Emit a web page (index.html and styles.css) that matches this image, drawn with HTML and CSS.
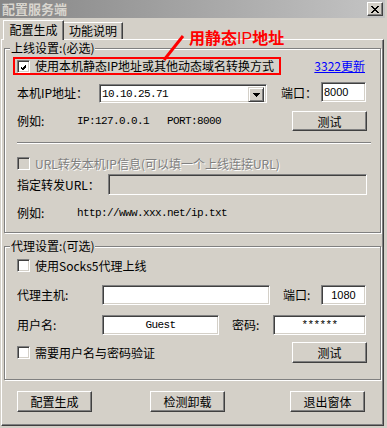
FILE: index.html
```html
<!DOCTYPE html>
<html>
<head>
<meta charset="utf-8">
<title>配置服务端</title>
<link rel="stylesheet" href="styles.css">
</head>
<body>
<div class="window">

<div class="titlebar">
	<span class="caption">配置服务端</span>
	<span class="close">
		<svg width="8" height="7" viewBox="0 0 8 7" shape-rendering="crispEdges"><path d="M0 0h2v1H0z M6 0h2v1H6z M1 1h2v1H1z M5 1h2v1H5z M2 2h4v1H2z M3 3h2v1H3z M2 4h4v1H2z M1 5h2v1H1z M5 5h2v1H5z M0 6h2v1H0z M6 6h2v1H6z" fill="#000"/></svg>
	</span>
</div>

<div class="tabs">
	<div class="tab tab_active">配置生成</div>
	<div class="tab">功能说明</div>
</div>

<div class="panel">

	<fieldset class="group group_online">
		<legend>上线设置:(必选)</legend>

		<div class="row row_static">
			<span class="mark">
				<span class="check"><svg width="9" height="9" viewBox="0 0 9 9" shape-rendering="crispEdges"><polygon points="1,3 3,5 7,1 7,4 3,8 1,6" fill="#000"/></svg></span>
				<span class="check_text">使用本机静态IP地址或其他动态域名转换方式</span>
			</span>
			<a class="link" href="#">3322更新</a>
		</div>

		<div class="row row_ip">
			<span class="label label_ip">本机IP地址：</span>
			<div class="combo">
				<span class="combo_text mono">10.10.25.71</span>
				<span class="combo_btn"><svg width="7" height="4" viewBox="0 0 7 4" shape-rendering="crispEdges"><path d="M0 0h7v1H0z M1 1h5v1H1z M2 2h3v1H2z M3 3h1v1H3z" fill="#000"/></svg></span>
			</div>
			<span class="label label_port">端口：</span>
			<span class="field field_port">8000</span>
		</div>

		<div class="row row_example">
			<span class="label label_example">例如:</span>
			<span class="mono">IP:127.0.0.1   PORT:8000</span>
			<button class="btn btn_test">测试</button>
		</div>

		<div class="separator"></div>

		<div class="row row_disabled">
			<span class="check check_disabled"></span>
			<span class="check_text disabled_text">URL转发本机IP信息(可以填一个上线连接URL)</span>
		</div>

		<div class="row row_url">
			<span class="label label_url">指定转发URL：</span>
			<span class="field field_url"></span>
		</div>

		<div class="row row_example2">
			<span class="label label_example">例如:</span>
			<span class="mono">http://www.xxx.net/ip.txt</span>
		</div>
	</fieldset>

	<fieldset class="group group_proxy">
		<legend>代理设置:(可选)</legend>

		<div class="row row_socks">
			<span class="check"></span>
			<span class="check_text">使用Socks5代理上线</span>
		</div>

		<div class="row row_host">
			<span class="label label_host">代理主机:</span>
			<span class="field field_host"></span>
			<span class="label label_port2">端口:</span>
			<span class="field field_port2">1080</span>
		</div>

		<div class="row row_user">
			<span class="label label_host">用户名:</span>
			<span class="field field_user mono">Guest</span>
			<span class="label label_pass">密码:</span>
			<span class="field field_pass mono">******</span>
		</div>

		<div class="row row_auth">
			<span class="check"></span>
			<span class="check_text">需要用户名与密码验证</span>
			<button class="btn btn_test btn_tall">测试</button>
		</div>
	</fieldset>

	<div class="row row_buttons">
		<button class="btn btn_bottom">配置生成</button>
		<button class="btn btn_bottom btn_mid">检测卸载</button>
		<button class="btn btn_bottom btn_exit">退出窗体</button>
	</div>

</div>

<!-- red note drawn over the dialog -->
<div class="note">用静态<span class="note_ip">IP</span>地址</div>
<svg class="note_line" width="30" height="30" viewBox="0 0 30 30"><line x1="23" y1="2" x2="4" y2="26" stroke="#f00" stroke-width="3"/></svg>

</div>
</body>
</html>
```

FILE: styles.css
```css
body {
	margin: 0;
	background: #d4d0c8;
	font-family: "Noto Sans CJK SC", sans-serif;
	font-size: 12px;
	line-height: 14px;
	color: #000;
}

.window {
	position: relative;
	width: 387px;
	height: 428px;
	overflow: hidden;
}

/* title bar */

.titlebar {
	width: 385px;
	height: 18px;
	box-sizing: border-box;
	padding: 0 2px 0 2px;
	display: flex;
	align-items: center;
	justify-content: space-between;
	background: linear-gradient(to right, #868686, #c4c4c4);
}

.caption {
	font-weight: bold;
	font-size: 13px;
	color: #d8d5ce;
	letter-spacing: 0px;
}

.close {
	width: 16px;
	height: 14px;
	box-sizing: border-box;
	display: flex;
	align-items: center;
	justify-content: center;
	background: #d4d0c8;
	border: 1px solid;
	border-color: #fff #404040 #404040 #fff;
	box-shadow: inset -1px -1px #808080;
}

/* tabs */

.tabs {
	margin-top: 2px;
	height: 19px;
	padding-left: 3px;
	display: flex;
	align-items: flex-start;
	position: relative;
	z-index: 1;
}

.tab {
	box-sizing: border-box;
	width: 59px;
	height: 17px;
	margin-top: 2px;
	display: flex;
	align-items: center;
	justify-content: center;
	border-top: 1px solid #fff;
	border-right: 1px solid #404040;
	box-shadow: inset -1px 0 #808080;
	background: #d4d0c8;
}

.tab_active {
	width: 61px;
	height: 20px;
	margin-top: 0;
	padding-bottom: 2px;
	border-left: 1px solid #fff;
	font-size: 12px;
}

/* tab page */

.panel {
	margin-left: 1px;
	width: 383px;
	height: 387px;
	box-sizing: border-box;
	padding: 1px 0 0 2px;
	border: 1px solid;
	border-color: #fff #404040 #404040 #fff;
	box-shadow: inset -1px -1px #808080;
}

.group {
	width: 377px;
	box-sizing: border-box;
	margin: 0;
	padding: 0 13px 12px 12px;
	border: 1px solid #808080;
	box-shadow: inset 1px 1px #fff, 1px 1px #fff;
}

.group legend {
	margin-left: -7px;
	padding: 0 1px;
	line-height: 14px;
	background: #d4d0c8;
}

.group_proxy {
	margin-top: 6px;
	padding-bottom: 16px;
}

.row {
	display: flex;
	align-items: center;
	white-space: pre;
}

.label {
	flex: none;
}

.mono {
	font-family: "Liberation Mono", monospace;
	font-size: 11px;
	letter-spacing: -0.6px;
}

/* checkboxes */

.check {
	flex: none;
	width: 13px;
	height: 13px;
	box-sizing: border-box;
	padding: 1px;
	background: #fff;
	border: 1px solid;
	border-color: #808080 #fff #fff #808080;
	box-shadow: inset 1px 1px #404040, inset -1px -1px #d4d0c8;
	display: flex;
}

.check svg {
	display: block;
	margin: 1px 0 0 1px;
}

.check_disabled {
	background: #d4d0c8;
}

.check_text {
	margin-left: 5px;
}

.disabled_text {
	color: #808080;
	text-shadow: 1px 1px #fff;
}

/* fields */

.field {
	flex: none;
	box-sizing: border-box;
	height: 20px;
	background: #fff;
	border: 1px solid;
	border-color: #808080 #fff #fff #808080;
	box-shadow: inset 1px 1px #404040, inset -1px -1px #d4d0c8;
	display: flex;
	align-items: center;
	justify-content: center;
}

.combo {
	flex: none;
	width: 168px;
	height: 19px;
	box-sizing: border-box;
	padding: 2px;
	background: #fff;
	border: 1px solid;
	border-color: #808080 #fff #fff #808080;
	box-shadow: inset 1px 1px #404040, inset -1px -1px #d4d0c8;
	display: flex;
	align-self: flex-end;
}

.combo_text {
	flex: 1;
	padding-left: 0px;
	line-height: 15px;
}

.combo_btn {
	width: 16px;
	height: 15px;
	box-sizing: border-box;
	background: #d4d0c8;
	border: 1px solid;
	border-color: #d4d0c8 #404040 #404040 #d4d0c8;
	box-shadow: inset 1px 1px #fff, inset -1px -1px #808080;
	display: flex;
	align-items: center;
	justify-content: center;
}

/* buttons */

.btn {
	flex: none;
	width: 75px;
	height: 20px;
	box-sizing: border-box;
	margin: 0;
	padding: 0;
	font-family: "Noto Sans CJK SC", sans-serif;
	font-size: 12px;
	color: #000;
	background: #d4d0c8;
	border: 1px solid;
	border-color: #fff #404040 #404040 #fff;
	box-shadow: inset -1px -1px #808080;
	border-radius: 0;
}

.btn_test {
	margin-left: auto;
}

.btn_tall {
	height: 21px;
}

/* online group rows */

.row_static {
	margin-top: 2px;
	height: 18px;
}

.mark {
	box-sizing: border-box;
	width: 268px;
	height: 18px;
	margin-left: -4px;
	padding-left: 2px;
	border: 2px solid #f00;
	display: flex;
	align-items: center;
}

.link {
	margin-left: auto;
	margin-right: 2px;
	color: #0000ff;
	text-decoration: underline;
}

.row_ip {
	margin-top: 7px;
	height: 21px;
	align-items: flex-start;
}

.label_ip {
	width: 82px;
	align-self: center;
}

.label_port {
	margin-left: 14px;
	width: 40px;
	align-self: center;
}

.field_port {
	width: 45px;
	justify-content: flex-start;
	padding-left: 2px;
	font-family: "Liberation Sans", sans-serif;
	font-size: 11px;
}

.row_example {
	margin-top: 8px;
	height: 20px;
}

.label_example {
	width: 60px;
}

.separator {
	margin-top: 11px;
	margin-right: -4px;
	border-top: 1px solid #808080;
	border-bottom: 1px solid #fff;
}

.row_disabled {
	margin-top: 13px;
	height: 13px;
}

.row_url {
	margin-top: 4px;
	height: 21px;
}

.label_url {
	width: 91px;
}

.field_url {
	flex: 1;
	height: 21px;
	background: #d4d0c8;
}

.row_example2 {
	margin-top: 11px;
	height: 14px;
}

/* proxy group rows */

.row_socks {
	margin-top: 6px;
	height: 13px;
}

.row_host {
	margin-top: 13px;
	height: 20px;
}

.label_host {
	width: 85px;
}

.field_host {
	width: 168px;
}

.label_port2 {
	margin-left: 13px;
	width: 38px;
}

.field_port2 {
	width: 45px;
	font-family: "Liberation Sans", sans-serif;
	font-size: 11px;
}

.row_user {
	margin-top: 10px;
	height: 20px;
}

.field_user {
	width: 117px;
}

.label_pass {
	margin-left: 13px;
	width: 41px;
}

.field_pass {
	width: 93px;
}

.row_auth {
	margin-top: 7px;
	height: 21px;
}

/* bottom buttons */

.row_buttons {
	margin-top: 11px;
	padding-left: 13px;
	height: 21px;
}

.btn_bottom {
	height: 21px;
}

.btn_mid {
	margin-left: 58px;
}

.btn_exit {
	margin-left: 65px;
}

/* red note */

.note {
	position: absolute;
	left: 189px;
	top: 27px;
	color: #f00;
	font-size: 16px;
	line-height: 20px;
	font-weight: bold;
	white-space: nowrap;
}

.note_ip {
	font-family: "Liberation Sans", sans-serif;
	font-weight: normal;
}

.note_line {
	position: absolute;
	left: 160px;
	top: 34px;
}
```
